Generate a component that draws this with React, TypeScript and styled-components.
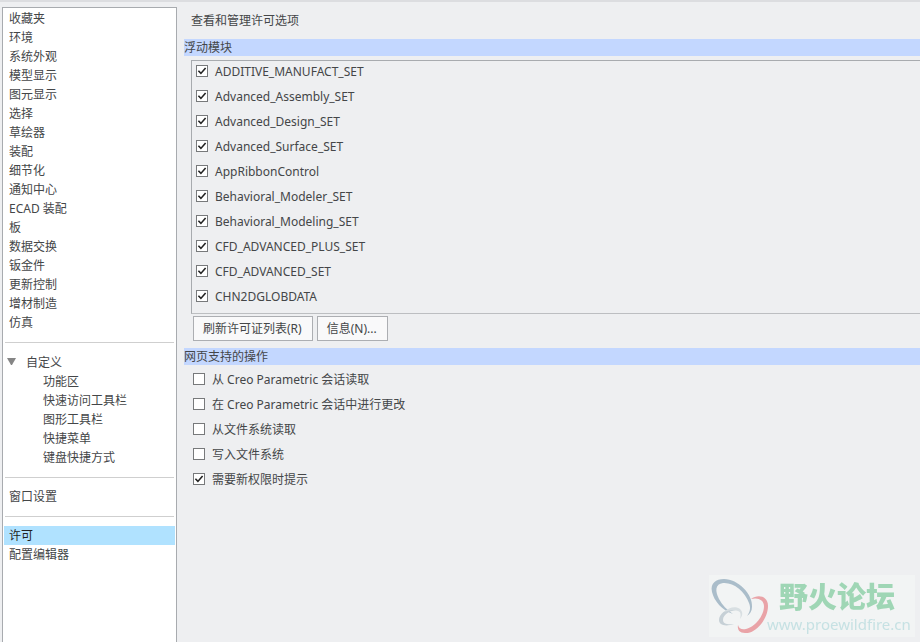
import React, { useState } from "react";
import styled, { createGlobalStyle } from "styled-components";

const GlobalStyle = createGlobalStyle`
  * { box-sizing: border-box; }
  html, body, #root { height: 100%; margin: 0; }
  body {
    background: #eeeff1;
    color: #444648;
    font: 12px/19px "Noto Sans", "Noto Sans CJK SC", sans-serif;
    overflow: hidden;
  }
`;

const Page = styled.div`
  display: flex;
  min-height: 100vh;
  border-top: 2px solid #dcdde0;
`;

const Sidebar = styled.nav`
  flex: none;
  width: 175px;
  margin: 5px 7px 0 2px;
  padding: 1px;
  background: #fff;
  border: 1px solid #a8abaf;
  border-bottom: 0;
`;

const NavGroup = styled.ul`
  list-style: none;
  margin: 0;
  padding: 0;
`;

const NavItem = styled.button<{ $level?: number; $active?: boolean }>`
  display: flex;
  align-items: center;
  width: 100%;
  height: 19px;
  padding: 0 0 0 ${(p) => (p.$level ? 39 : 5)}px;
  border: 0;
  background: ${(p) => (p.$active ? "#b0e2ff" : "transparent")};
  color: ${(p) => (p.$active ? "#222" : "inherit")};
  font: inherit;
  text-align: left;
`;

const TreeHead = styled(NavItem)`
  gap: 9px;
  height: 20px;
  padding-left: 3px;
`;

const Separator = styled.hr`
  height: 1px;
  margin: 10px 1px 9px;
  border: 0;
  background: #cfcfcf;
`;

const Main = styled.main`
  flex: 1;
  min-width: 0;
`;

const Title = styled.h1`
  margin: 0;
  padding: 9px 7px;
  font: inherit;
`;

const SectionTitle = styled.h2`
  margin: 0;
  background: #c3d7ff;
  font: inherit;
  line-height: 17px;
`;

const ModuleList = styled.div`
  display: flex;
  flex-direction: column;
  gap: 4px;
  margin: 4px 0 0 7px;
  padding: 0 0 6px 4px;
  border: 1px solid #a8abaf;
  border-right: 0;
  border-bottom-color: #bcbec1;
`;

const ActionList = styled.div`
  display: flex;
  flex-direction: column;
  gap: 4px;
  padding: 4px 9px;
`;

const CheckLabel = styled.label`
  display: flex;
  align-items: center;
  align-self: flex-start;
  gap: 7px;
  height: 21px;
  white-space: nowrap;
`;

const CheckBox = styled.span`
  display: grid;
  width: 12px;
  height: 12px;
  margin-bottom: 2px;
  > * { grid-area: 1 / 1; }
  > svg { pointer-events: none; }
`;

const CheckInput = styled.input`
  appearance: none;
  width: 12px;
  height: 12px;
  margin: 0;
  border: 1px solid #77797b;
  background: #fff;
`;

const Buttons = styled.div`
  display: flex;
  gap: 4px;
  padding: 2px 9px 7px;
`;

const Button = styled.button`
  height: 25px;
  padding: 0 10px 0 9px;
  border: 1px solid #acaeb2;
  background: #f9f9fa;
  color: inherit;
  font: inherit;
  white-space: nowrap;
`;

const Watermark = styled.div`
  position: fixed;
  right: 5px;
  bottom: 5px;
  display: flex;
  width: 206px;
  height: 62px;
  background: #f2f4f4;
  pointer-events: none;
`;

const RingsIcon = styled.svg`
  flex: none;
  width: 58px;
  height: 62px;
`;

const WatermarkText = styled.div`
  display: flex;
  flex-direction: column;
  white-space: nowrap;
`;

const WatermarkName = styled.strong`
  padding-left: 12px;
  color: #9fd6b5;
  font: 900 29px/40px "Noto Sans CJK SC", sans-serif;
`;

const WatermarkUrl = styled.span`
  color: #c6e1e3;
  font: 15px/18px "Noto Sans", sans-serif;
`;

const general = [
  "收藏夹", "环境", "系统外观", "模型显示", "图元显示", "选择", "草绘器", "装配", "细节化",
  "通知中心", "ECAD 装配", "板", "数据交换", "钣金件", "更新控制", "增材制造", "仿真",
];
const customize = ["功能区", "快速访问工具栏", "图形工具栏", "快捷菜单", "键盘快捷方式"];
const modules = [
  "ADDITIVE_MANUFACT_SET", "Advanced_Assembly_SET", "Advanced_Design_SET",
  "Advanced_Surface_SET", "AppRibbonControl", "Behavioral_Modeler_SET",
  "Behavioral_Modeling_SET", "CFD_ADVANCED_PLUS_SET", "CFD_ADVANCED_SET", "CHN2DGLOBDATA",
];
const actions: [string, boolean][] = [
  ["从 Creo Parametric 会话读取", false],
  ["在 Creo Parametric 会话中进行更改", false],
  ["从文件系统读取", false],
  ["写入文件系统", false],
  ["需要新权限时提示", true],
];

function Check({ label, initial }: { label: string; initial: boolean }) {
  const [on, setOn] = useState(initial);
  return (
    <CheckLabel>
      <CheckBox>
        <CheckInput type="checkbox" checked={on} onChange={() => setOn(!on)} />
        {on && (
          <svg width="12" height="12" viewBox="0 0 12 12" fill="none" stroke="#222" strokeWidth="1.6">
            <path d="M2.4 5.8 4.9 8.4 9.6 2.9" />
          </svg>
        )}
      </CheckBox>
      {label}
    </CheckLabel>
  );
}

function Items({ names, level, active, onPick }: {
  names: string[]; level?: number; active: string; onPick: (name: string) => void;
}) {
  return (
    <NavGroup>
      {names.map((n) => (
        <li key={n}>
          <NavItem $level={level} $active={n === active} onClick={() => onPick(n)}>{n}</NavItem>
        </li>
      ))}
    </NavGroup>
  );
}

function Rings() {
  return (
    <RingsIcon viewBox="0 0 58 62" overflow="visible" aria-hidden="true">
      <path fill="#aabdca" d="M3 17C1 8 7 4 15 4c14 0 29 15 28 28 0 4-2 7-5 9 3-4 4-8 2-13C36 16 24 7 14 8 6 9 6 16 10 24c3 6 8 11 14 15C13 35 5 26 3 17Z" />
      <path fill="#e9a3a7" d="M42 24c7-5 17-3 17 7 0 13-12 28-23 27-5 0-8-3-7-8 1 4 4 5 8 4 9-2 18-13 18-23 0-6-6-9-13-7Z" />
      <path fill="#c6d0d6" d="M29 35c-7-4-19 2-19 10 0 5 6 7 15 4-6 1-11 0-11-4 0-6 8-10 15-10Z" />
      <path fill="#d8dfe2" d="M15 37c5-5 12-6 16-3 3 3 3 6 0 10 1-4 1-7-2-8-4-2-8-1-14 1Z" />
    </RingsIcon>
  );
}

export default function App() {
  const [active, setActive] = useState("许可");
  const [open, setOpen] = useState(true);
  return (
    <>
      <GlobalStyle />
      <Page>
        <Sidebar>
          <Items names={general} active={active} onPick={setActive} />
          <Separator />
          <TreeHead aria-expanded={open} onClick={() => setOpen(!open)}>
            <svg width="10" height="8" viewBox="0 0 10 8" aria-hidden="true">
              <path d="M0 0h9L5 7H4Z" fill="#858585" />
            </svg>
            自定义
          </TreeHead>
          {open && <Items names={customize} level={1} active={active} onPick={setActive} />}
          <Separator />
          <Items names={["窗口设置"]} active={active} onPick={setActive} />
          <Separator />
          <Items names={["许可", "配置编辑器"]} active={active} onPick={setActive} />
        </Sidebar>
        <Main>
          <Title>查看和管理许可选项</Title>
          <SectionTitle>浮动模块</SectionTitle>
          <ModuleList>
            {modules.map((m) => <Check key={m} label={m} initial />)}
          </ModuleList>
          <Buttons>
            <Button>刷新许可证列表(R)</Button>
            <Button>信息(N)...</Button>
          </Buttons>
          <SectionTitle>网页支持的操作</SectionTitle>
          <ActionList>
            {actions.map(([label, on]) => <Check key={label} label={label} initial={on} />)}
          </ActionList>
        </Main>
        <Watermark>
          <Rings />
          <WatermarkText>
            <WatermarkName>野火论坛</WatermarkName>
            <WatermarkUrl>www.proewildfire.cn</WatermarkUrl>
          </WatermarkText>
        </Watermark>
      </Page>
    </>
  );
}
